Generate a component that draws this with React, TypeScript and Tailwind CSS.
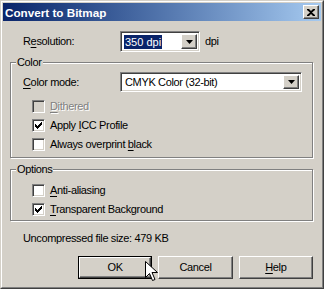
const raised =
  'border border-t-white border-l-white border-r-[#404040] border-b-[#404040] shadow-[inset_-1px_-1px_#808080] bg-[#d4d0c8]'
const sunken =
  'border border-t-[#808080] border-l-[#808080] border-r-white border-b-white shadow-[inset_1px_1px_#404040,inset_-1px_-1px_#d4d0c8]'

function DropArrow() {
  return (
    <div className={`${raised} w-[16px] h-full flex items-center justify-center shrink-0`}>
      <svg width="7" height="4" viewBox="0 0 7 4">
        <path d="M0 0h7L3.5 4z" fill="#000" />
      </svg>
    </div>
  )
}

function Check({ checked, disabled, label, u }: { checked?: boolean; disabled?: boolean; label: string; u: number }) {
  return (
    <div className="flex items-center h-[13px] gap-[5px]">
      <div className={`${sunken} w-[13px] h-[13px] flex items-center justify-center ${disabled ? 'bg-[#d4d0c8]' : 'bg-white'}`}>
        {checked && (
          <svg width="7" height="7" viewBox="0 0 7 7">
            <path d="M0 2h1v1h1v1h1V3h1V2h1V1h1V0h1v3h-1v1h-1v1h-1v1h-1v1h-1V6H1V5H0z" fill="#000" />
          </svg>
        )}
      </div>
      <span className={disabled ? 'text-[#808080] [text-shadow:1px_1px_#fff]' : ''}>
        {label.slice(0, u)}
        <span className="underline underline-offset-[2px]">{label[u]}</span>
        {label.slice(u + 1)}
      </span>
    </div>
  )
}

function Group({ title, h, children }: { title: string; h: string; children: React.ReactNode }) {
  return (
    <div className={`relative border border-[#808080] shadow-[1px_1px_0_#fff,inset_1px_1px_0_#fff] ${h}`}>
      <span className="absolute -top-[8px] left-[5px] px-[1px] bg-[#d4d0c8] leading-[14px]">{title}</span>
      {children}
    </div>
  )
}

function Button({ label, u, def }: { label: string; u?: number; def?: boolean }) {
  const inner = (
    <div className={`${raised} w-full h-full flex items-center justify-center`}>
      {u === undefined ? label : (
        <>
          {label.slice(0, u)}
          <span className="underline underline-offset-[2px]">{label[u]}</span>
          {label.slice(u + 1)}
        </>
      )}
    </div>
  )
  return def ? (
    <div className="w-[75px] h-[23px] border border-black">{inner}</div>
  ) : (
    <div className="w-[75px] h-[23px]">{inner}</div>
  )
}

export default function App() {
  return (
    <div className="relative w-[324px] h-[289px] bg-[#d4d0c8] text-[11px] leading-[13px] tracking-[-0.35px] text-black font-['Liberation_Sans',Arial,sans-serif] border border-t-[#d4d0c8] border-l-[#d4d0c8] border-r-[#404040] border-b-[#404040]">
      <div className="h-full border border-t-white border-l-white border-r-[#808080] border-b-[#808080] p-px flex flex-col">
        {/* title bar */}
        <div className="h-[18px] shrink-0 flex items-center justify-between bg-gradient-to-r from-[#0a246a] to-[#a6caf0] pl-[2px] pr-[2px]">
          <span className="text-white font-bold text-[11.7px] tracking-normal">Convert to Bitmap</span>
          <div className={`${raised} w-[16px] h-[14px] flex items-center justify-center`}>
            <svg width="8" height="7" viewBox="0 0 8 7">
              <path d="M0 0h2l2 2 2-2h2v1L5 3.5 8 6v1H6L4 5 2 7H0V6l3-2.5L0 1z" fill="#000" />
            </svg>
          </div>
        </div>

        <div className="pl-[7px] pr-[8px] flex flex-col">
          <div className="mt-[10px] h-[21px] flex items-center">
            <span className="pl-[13px] w-[110px]">
              R<span className="underline underline-offset-[2px]">e</span>solution:
            </span>
            <div className={`${sunken} bg-white w-[80px] h-[21px] flex items-stretch`}>
              <div className="flex-1 flex items-center pl-[3px]">
                <span className="bg-[#0a246a] text-white px-[1px] leading-[14px] tracking-normal">350 dpi</span>
              </div>
              <div className="p-[2px] pl-0">
                <DropArrow />
              </div>
            </div>
            <span className="ml-[5px]">dpi</span>
          </div>

          <div className="mt-[10px]">
            <Group title="Color" h="h-[96px]">
              <div className="pt-[9px] pl-[12px] flex items-center h-[29px]">
                <span className="w-[97px]">
                  <span className="underline underline-offset-[2px]">C</span>olor mode:
                </span>
                <div className={`${sunken} bg-white w-[182px] h-[20px] flex items-stretch`}>
                  <div className="flex-1 flex items-center pl-[4px]">CMYK Color (32-bit)</div>
                  <div className="p-[2px] pl-0">
                    <DropArrow />
                  </div>
                </div>
              </div>
              <div className="mt-[8px] pl-[21px] flex flex-col gap-[6px]">
                <Check disabled label="Dithered" u={0} />
                <Check checked label="Apply ICC Profile" u={6} />
                <Check label="Always overprint black" u={17} />
              </div>
            </Group>
          </div>

          <div className="mt-[11px]">
            <Group title="Options" h="h-[52px]">
              <div className="pt-[14px] pl-[21px] flex flex-col gap-[6px]">
                <Check label="Anti-aliasing" u={0} />
                <Check checked label="Transparent Background" u={0} />
              </div>
            </Group>
          </div>

          <div className="mt-[11px] pl-[13px]">Uncompressed file size: 479 KB</div>

          <div className="mt-[11px] ml-[68px] flex gap-[6px]">
            <Button label="OK" def />
            <Button label="Cancel" />
            <Button label="Help" u={0} />
          </div>
        </div>
      </div>

      {/* mouse pointer */}
      <svg className="absolute left-[144px] top-[260px]" width="13" height="21" viewBox="0 0 13 21">
        <path d="M0.5 0.5v16l4-4 3 7 2.5-1-3-7h5.5z" fill="#fff" stroke="#000" strokeWidth="1" />
      </svg>
    </div>
  )
}
